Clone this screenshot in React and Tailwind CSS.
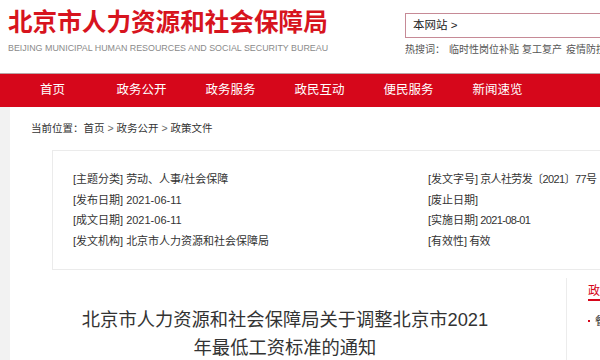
export default function App() {
  const nav = ["首页", "政务公开", "政务服务", "政民互动", "便民服务", "新闻速览"];
  const left = [
    ["[主题分类]", "劳动、人事/社会保障"],
    ["[发布日期]", "2021-06-11"],
    ["[成文日期]", "2021-06-11"],
    ["[发文机构]", "北京市人力资源和社会保障局"],
  ];
  const right = [
    ["[发文字号]", "京人社劳发〔2021〕77号"],
    ["[废止日期]", ""],
    ["[实施日期]", "2021-08-01"],
    ["[有效性]", "有效"],
  ];
  return (
    <div className="w-[600px] h-[360px] overflow-hidden bg-white font-['Liberation_Sans','Noto_Sans_CJK_SC',sans-serif] text-[#333]">
      <header className="h-[73px] flex">
        <div className="pl-[8px] pt-[8px]">
          <div className="text-[24.6px] leading-[30px] font-bold text-[#d7141e] whitespace-nowrap">北京市人力资源和社会保障局</div>
          <div className="mt-[5px] text-[8.9px] leading-[10px] text-[#8a8a8a] whitespace-nowrap">BEIJING MUNICIPAL HUMAN RESOURCES AND SOCIAL SECURITY BUREAU</div>
        </div>
        <div className="ml-auto pt-[13px] w-[195px] shrink-0">
          <div className="h-[25px] border border-r-0 border-[#c68a96] pl-[7px] flex items-center text-[11.5px] text-[#222]">本网站 &gt;</div>
          <div className="mt-[6px] text-[10px] leading-[12px] text-[#555] whitespace-nowrap">
            热搜词：<span className="ml-[4px]">临时性岗位补贴</span>
            <span className="ml-[3px]">复工复产</span>
            <span className="ml-[4px]">疫情防控</span>
          </div>
        </div>
      </header>
      <div className="h-px bg-[#b9a3a5]" />
      <nav className="h-[33px] bg-[#d6071b] flex pl-[8px]">
        {nav.map((n) => (
          <div key={n} className="w-[89px] text-center text-white text-[12.5px] leading-[33px]">{n}</div>
        ))}
      </nav>
      <div className="flex bg-[#f2f2f2] h-[253px]">
        <div className="w-[10px] shrink-0" />
        <main className="flex-1 bg-white">
          <div className="pt-[14px] pl-[21px] text-[10.5px] leading-[14px] text-[#333]">
            当前位置：首页 <span className="text-[#666]">&gt;</span> 政务公开 <span className="text-[#666]">&gt;</span> 政策文件
          </div>
          <div className="ml-[42px] mt-[15px] border border-r-0 border-[#ebebeb] pt-[18px] pb-[18px] pl-[20px] flex text-[11px] leading-[20.5px]">
            <div className="w-[355px]">
              {left.map(([k, v]) => (
                <div key={k} className="h-[20.5px] whitespace-nowrap">
                  {k}<span className="ml-[3px]">{v}</span>
                </div>
              ))}
            </div>
            <div>
              {right.map(([k, v]) => (
                <div key={k} className="h-[20.5px] whitespace-nowrap">
                  {k}<span className="ml-[2px] tracking-[-0.6px]">{v}</span>
                </div>
              ))}
            </div>
          </div>
          <div className="flex">
            <div className="w-[556px] pr-[6px] shrink-0">
              <div className="w-[416px] mx-auto mt-[36px] text-center text-[18.3px] leading-[28px] text-[#333]">
                北京市人力资源和社会保障局关于调整北京市2021年最低工资标准的通知
              </div>
            </div>
            <div className="mt-[8px] flex-1 border-l border-[#ececec] pl-[21px] pt-[6px]">
              <div className="text-[12px] leading-[14px] text-[#d6071b] whitespace-nowrap border-b-2 border-[#d6071b] pb-[1px]">政策</div>
              <div className="mt-[13px] flex items-center gap-[5px] text-[11px] leading-[14px]">
                <span className="w-[2px] h-[2px] bg-[#d6071b] shrink-0" />
                <span className="whitespace-nowrap">餐饮</span>
              </div>
            </div>
          </div>
        </main>
      </div>
    </div>
  );
}
